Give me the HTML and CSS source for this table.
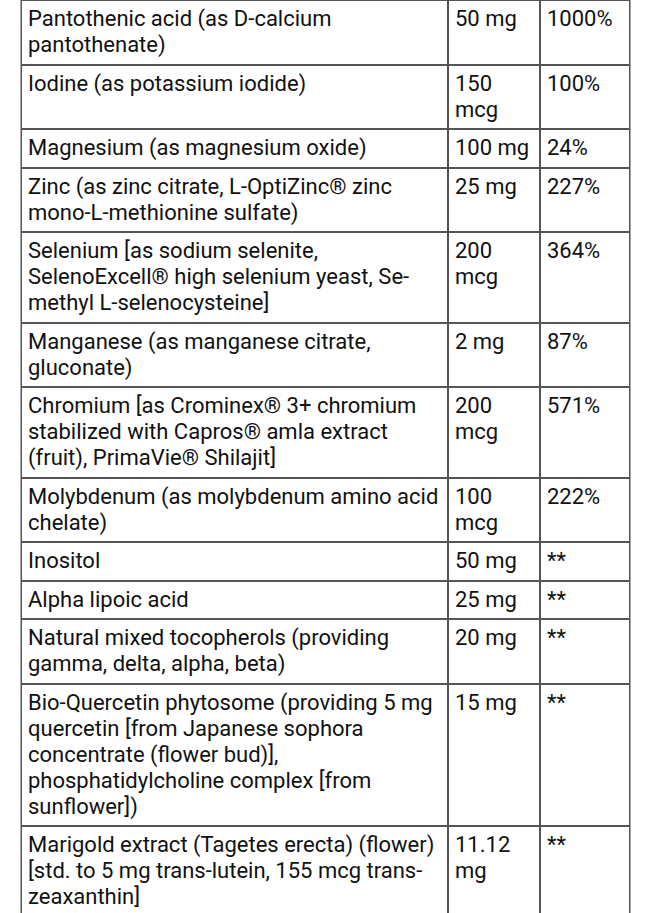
FILE: index.html
```html
<!DOCTYPE html>
<html lang="en">
<head>
<meta charset="utf-8">
<title>Supplement Facts</title>
<link rel="stylesheet" href="styles.css">
</head>
<body>
<table class="facts">
  <colgroup>
    <col class="c-name">
    <col class="c-amt">
    <col class="c-dv">
  </colgroup>
  <tbody>
    <tr><td>Pantothenic acid (as D-calcium pantothenate)</td><td>50 mg</td><td>1000%</td></tr>
    <tr><td>Iodine (as potassium iodide)</td><td>150 mcg</td><td>100%</td></tr>
    <tr><td>Magnesium (as magnesium oxide)</td><td>100 mg</td><td>24%</td></tr>
    <tr><td>Zinc (as zinc citrate, L-OptiZinc® zinc mono-L-methionine sulfate)</td><td>25 mg</td><td>227%</td></tr>
    <tr><td>Selenium [as sodium selenite, SelenoExcell® high selenium yeast, Se-methyl L-selenocysteine]</td><td>200 mcg</td><td>364%</td></tr>
    <tr><td>Manganese (as manganese citrate, gluconate)</td><td>2 mg</td><td>87%</td></tr>
    <tr><td>Chromium [as Crominex® 3+ chromium stabilized with Capros® amla extract (fruit), PrimaVie® Shilajit]</td><td>200 mcg</td><td>571%</td></tr>
    <tr><td>Molybdenum (as molybdenum amino acid chelate)</td><td>100 mcg</td><td>222%</td></tr>
    <tr><td>Inositol</td><td>50 mg</td><td>**</td></tr>
    <tr><td>Alpha lipoic acid</td><td>25 mg</td><td>**</td></tr>
    <tr><td>Natural mixed tocopherols (providing gamma, delta, alpha, beta)</td><td>20 mg</td><td>**</td></tr>
    <tr><td>Bio-Quercetin phytosome (providing 5 mg quercetin [from Japanese sophora concentrate (flower bud)], phosphatidylcholine complex [from sunflower])</td><td>15 mg</td><td>**</td></tr>
    <tr><td>Marigold extract (Tagetes erecta) (flower) [std. to 5 mg trans-lutein, 155 mcg trans-zeaxanthin]</td><td>11.12 mg</td><td>**</td></tr>
  </tbody>
</table>
</body>
</html>
```
FILE: styles.css
```css
html, body {
  margin: 0;
  padding: 0;
  background: #ffffff;
}
body {
  padding: 0 19px 0 20px;
  font-family: Roboto, "Noto Sans", "Liberation Sans", sans-serif;
  color: #111111;
}
.facts {
  width: 611px;
  margin-top: -1px;
  table-layout: fixed;
  border-collapse: separate;
  border-spacing: 0;
  border: 1px solid #a8a8a8;
  font-size: 22px;
  line-height: 26px;
}
.c-name { width: 427px; }
.c-amt { width: 92px; }
.c-dv { width: 90px; }
.facts td {
  border: 1px solid #555555;
  padding: 5px 5px 5.5px 6px;
  vertical-align: top;
  text-align: left;
}
```
